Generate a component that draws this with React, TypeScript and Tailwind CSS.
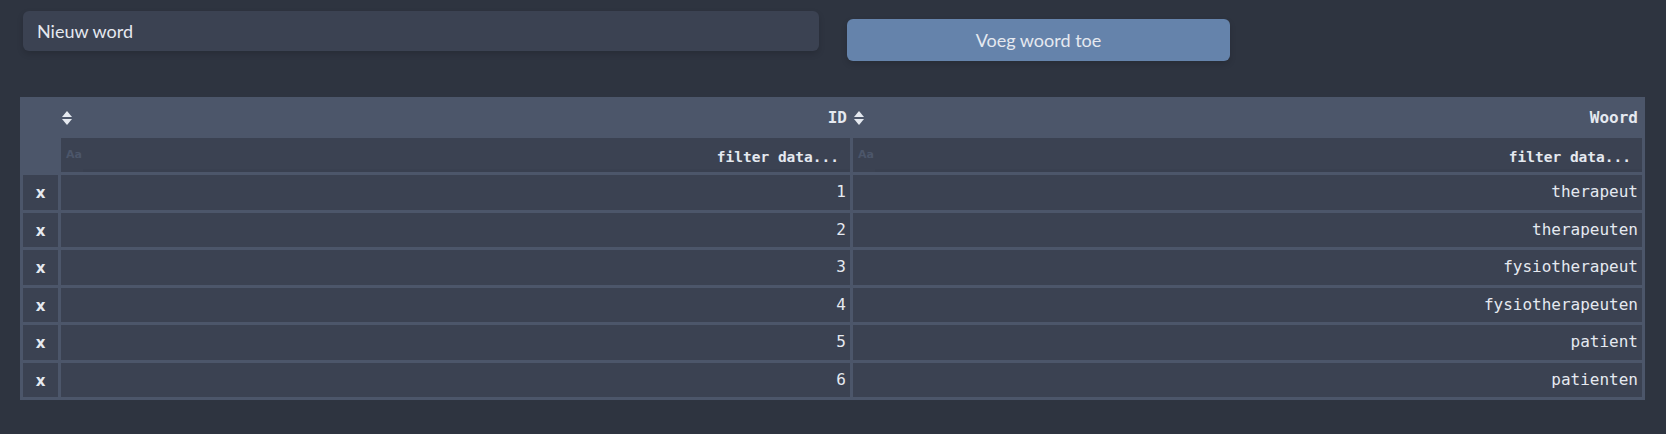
import { FC } from 'react';

const rows = [
  { id: 1, word: 'therapeut' },
  { id: 2, word: 'therapeuten' },
  { id: 3, word: 'fysiotherapeut' },
  { id: 4, word: 'fysiotherapeuten' },
  { id: 5, word: 'patient' },
  { id: 6, word: 'patienten' },
];

const SortIcon: FC = () => (
  <svg width="10" height="14" viewBox="0 0 10 14" className="shrink-0">
    <path d="M0 6 L5 0 L10 6 Z" fill="#e5e9f0" />
    <path d="M0 8 L10 8 L5 14 Z" fill="#e5e9f0" />
  </svg>
);

const FilterCell: FC = () => (
  <td className="p-0 h-[34px] bg-[#3b4252] align-middle">
    <div className="flex h-[34px] items-stretch">
      <span className="w-[22px] pl-[5px] flex items-center text-[11px] font-bold text-[#4c566a] font-['DejaVu_Sans',sans-serif]">
        Aa
      </span>
      <div className="flex-1 flex flex-col">
        <input
          placeholder="filter data..."
          className="flex-1 min-w-0 bg-transparent text-right pt-[9px] pr-[11px] outline-none font-['DejaVu_Sans_Mono',monospace] text-[14.5px] font-bold text-[#e5e9f0] placeholder:text-[#e5e9f0]"
        />
        <div className="h-[5px] bg-[#394050]" />
      </div>
    </div>
  </td>
);

export default function App() {
  return (
    <div className="min-h-screen bg-[#2e3440] pt-[11px] px-[20px] font-['Lato',sans-serif]">
      <div className="flex items-start">
        <input
          placeholder="Nieuw word"
          className="ml-[3px] w-[796px] h-[40px] rounded-md bg-[#3b4252] px-[14px] text-[18px] text-[#e5e9f0] placeholder:text-[#e5e9f0] outline-none shadow-[0_3px_6px_rgba(0,0,0,0.15)]"
        />
        <button className="ml-[28px] mt-[8px] w-[383px] h-[42px] rounded-md bg-[#6583ab] text-[18px] text-[#e5e9f0] shadow-[0_3px_6px_rgba(0,0,0,0.15)]">
          Voeg woord toe
        </button>
      </div>

      <table className="mt-[36px] w-[1625px] table-fixed border-separate border-spacing-[3px] bg-[#4c566a] font-['DejaVu_Sans_Mono',monospace] text-[#e5e9f0]">
        <colgroup>
          <col className="w-[35px]" />
          <col />
          <col />
        </colgroup>
        <thead>
          <tr>
            <th className="p-0 h-[35px]" rowSpan={2} />
            <th className="p-0 h-[35px]">
              <div className="flex items-center justify-between pl-[1px] pr-[3px] text-[16px] font-bold">
                <SortIcon />
                <span>ID</span>
              </div>
            </th>
            <th className="p-0 h-[35px]">
              <div className="flex items-center justify-between pl-[1px] pr-[4px] text-[16px] font-bold">
                <SortIcon />
                <span>Woord</span>
              </div>
            </th>
          </tr>
          <tr>
            <FilterCell />
            <FilterCell />
          </tr>
        </thead>
        <tbody>
          {rows.map((r) => (
            <tr key={r.id}>
              <td className="p-0 pt-[2px] h-[34.5px] bg-[#3b4252] text-center align-middle">
                <span className="text-[15px] font-bold font-['DejaVu_Sans',sans-serif] leading-none">x</span>
              </td>
              <td className="p-0 pr-[4px] h-[34.5px] bg-[#3b4252] text-right align-middle text-[16px]">
                {r.id}
              </td>
              <td className="p-0 pr-[4px] h-[34.5px] bg-[#3b4252] text-right align-middle text-[16px]">
                {r.word}
              </td>
            </tr>
          ))}
        </tbody>
      </table>
    </div>
  );
}
